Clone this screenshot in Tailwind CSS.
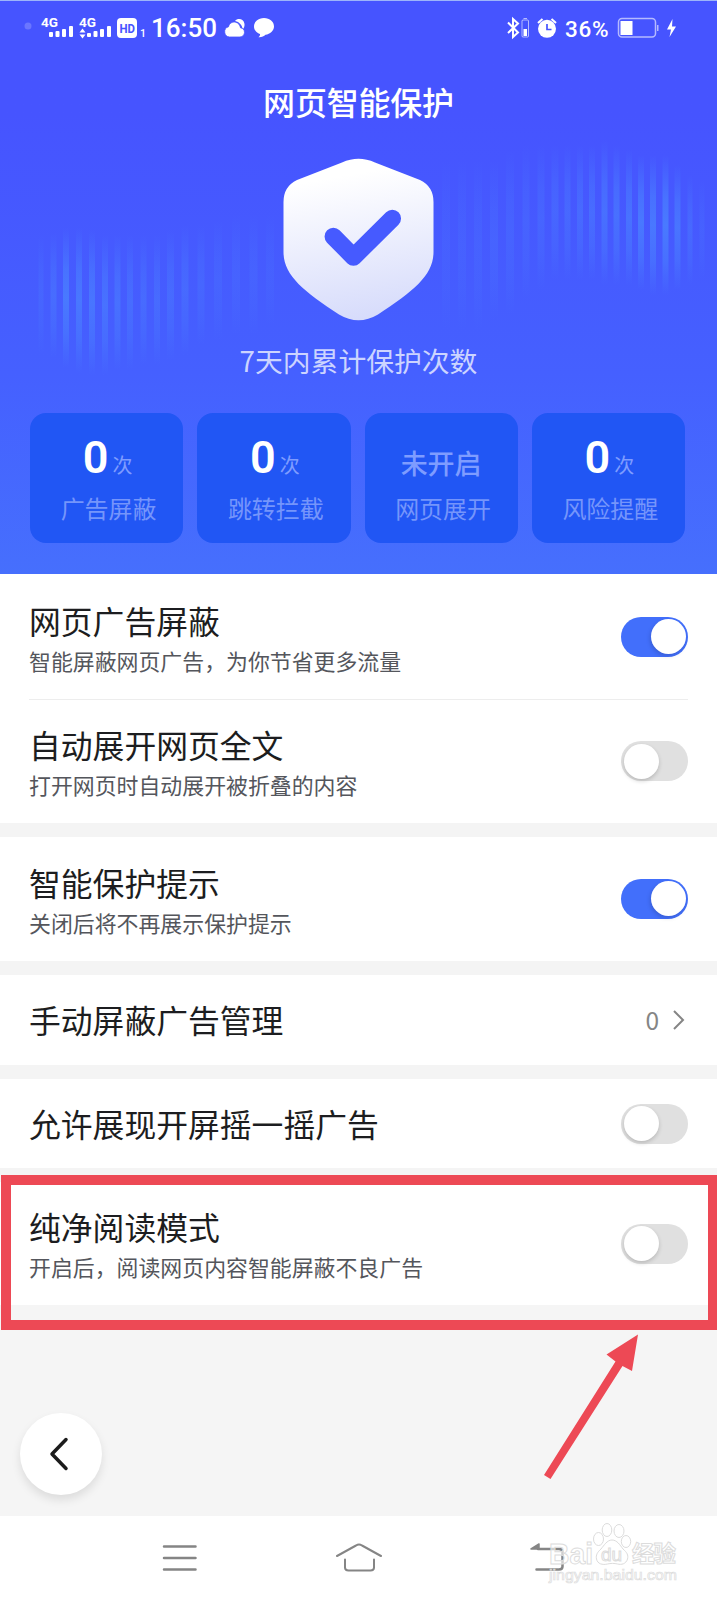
<!DOCTYPE html>
<html lang="zh-CN">
<head>
    <meta charset="UTF-8">
    <meta name="viewport" content="width=device-width, initial-scale=1.0">
    <title>网页智能保护</title>
    <script src="https://cdn.jsdelivr.net/npm/@tailwindcss/browser@4"></script>
</head>
<body class="bg-[#f5f5f5] font-['Noto_Sans_CJK_SC',sans-serif] text-[#1c1d20]">
<div class="relative w-[717px] h-[1600px] overflow-hidden flex flex-col">

    <!-- Header -->
    <header class="relative h-[574px] shrink-0 bg-linear-to-b from-[#4654ff] from-20% via-[#4560ff] via-65% to-[#466ffd] border-t border-[#9db4fa] text-white">
        <!-- Light stripes -->
        <svg class="absolute left-0 top-0 w-[717px] h-[420px]" viewBox="0 1 717 420">
            <defs>
                <linearGradient id="stripe" x1="0" y1="0" x2="0" y2="1">
                    <stop offset="0" stop-color="#4a84ff" stop-opacity="0"/>
                    <stop offset=".3" stop-color="#4a84ff" stop-opacity=".7"/>
                    <stop offset=".5" stop-color="#4a84ff" stop-opacity=".9"/>
                    <stop offset=".75" stop-color="#4a84ff" stop-opacity=".6"/>
                    <stop offset="1" stop-color="#4a84ff" stop-opacity="0"/>
                </linearGradient>
            </defs>
            <g id="stripes" fill="url(#stripe)"></g>
        </svg>

        <!-- Status bar -->
        <div class="relative h-[54px] pl-4 pr-10 flex items-center justify-between">
            <div class="flex items-center">
                <svg class="w-[132px] h-[54px]" viewBox="16 1 132 54" fill="#fff" font-family="Roboto, sans-serif" font-weight="700">
                    <circle cx="28" cy="26" r="3.5" fill-opacity=".2"/>
                    <text x="41" y="26.500" font-size="13.500" textLength="17" lengthAdjust="spacingAndGlyphs">4G</text>
                    <rect x="49" y="32" width="4" height="5" rx="1"/>
                    <rect x="55.500" y="31" width="4" height="6" rx="1"/>
                    <rect x="62" y="29" width="4" height="8" rx="1"/>
                    <rect x="69" y="26" width="4" height="11" rx="1"/>
                    <text x="79" y="26.500" font-size="13.500" textLength="17" lengthAdjust="spacingAndGlyphs">4G</text>
                    <path d="M79.500 32.500 82.500 28.500 85.500 32.500zM79.500 34.500H85.500L82.500 38.500z"/>
                    <rect x="87" y="33" width="4" height="4" rx="1"/>
                    <rect x="93.500" y="31" width="4" height="6" rx="1"/>
                    <rect x="100" y="29" width="4" height="8" rx="1"/>
                    <rect x="107" y="26" width="4" height="11" rx="1"/>
                    <rect x="117" y="18" width="20" height="20" rx="4"/>
                    <text x="119.500" y="32.500" font-size="12.500" textLength="15.500" lengthAdjust="spacingAndGlyphs" fill="#4654ff">HD</text>
                    <text x="140" y="37" font-size="10.500" font-weight="500">1</text>
                </svg>
                <span class="w-[70px] pl-[3px] font-['Roboto'] font-medium text-[26px] leading-[54px]">16:50</span>
                <svg class="w-[58px] h-[54px]" viewBox="218 1 58 54" fill="#fff">
                    <path d="M235 21c3-3.500 9-2 9.500 3 .2 2-.5 4-1.800 5.200C242 25 239.500 22 235 21z"/>
                    <path d="M229.500 37a5.200 5.200 0 0 1-1-10.200c.8-3.600 4-5.300 7-4.600 3 .6 4.600 3 5 5.600 2.300.3 4 2 4 4.500 0 2.600-2 4.700-4.500 4.700z" stroke="#4654ff" stroke-width=".8"/>
                    <path d="M264 18c5.800 0 10 3.600 10 8.500 0 4.200-4 7.500-8.500 8.300-1.500 1.500-4 2.600-7 2.400 1.200-1 1.700-2 1.500-3.200-3.500-1.200-6-4-6-7.500 0-4.900 4.200-8.500 10-8.500z"/>
                </svg>
            </div>
            <div class="flex items-center">
                <svg class="w-[56px] h-[54px]" viewBox="505 1 56 54" fill="none" stroke="#fff">
                    <path d="M508 22.500 518 32.500 513 37V19L518 23.500 508 33" stroke-width="2"/>
                    <g stroke-opacity=".6">
                        <rect x="522" y="20" width="6.500" height="17" rx="1"/>
                        <path d="M523.500 18.500h3.500"/>
                    </g>
                    <rect x="523.500" y="29" width="3.500" height="7" fill="#fff" stroke="none"/>
                    <circle cx="547" cy="28.800" r="9" fill="#fff" stroke="none"/>
                    <path d="M538 23 542.500 19M556 23 551.500 19" stroke-width="2"/>
                    <path d="M547 24v5.500h4.500" stroke="#4654ff" stroke-width="1.700"/>
                </svg>
                <span class="w-[54px] pl-1 pt-px font-['Roboto'] font-medium text-[22.5px] tracking-[0.7px] leading-[54px]">36%</span>
                <svg class="w-[62px] h-[54px]" viewBox="615 1 62 54" fill="#fff">
                    <rect x="618.500" y="18.500" width="37" height="18.500" rx="3.500" fill="none" stroke="#fff" stroke-opacity=".6" stroke-width="1.500"/>
                    <rect x="620.500" y="21" width="12" height="14"/>
                    <rect x="657" y="25" width="1.500" height="6" fill-opacity=".6"/>
                    <path d="M672.500 19 667 29.500h4L669.500 37 676 26.500h-4z"/>
                </svg>
            </div>
        </div>

        <h1 class="relative pt-[22px] text-center text-[32px] leading-[48px] font-medium tracking-[-0.2px]">网页智能保护</h1>

        <div class="relative mt-[33px] flex flex-col items-center">
            <svg class="w-[152px] h-[164px]" viewBox="283 158 152 164">
                <defs>
                    <linearGradient id="shield" x1=".42" y1="0" x2=".58" y2="1">
                        <stop offset=".1" stop-color="#fff"/>
                        <stop offset="1" stop-color="#d6dbfb"/>
                    </linearGradient>
                </defs>
                <path d="M342 162.500Q358.500 155 375 162.500L420 180Q433.500 186.500 433.500 202V252C433.500 275 414 291 378 314.500Q358.500 326 339 314.500C303 291 283.500 275 283.500 252V202Q283.500 186.500 297 180Z" fill="url(#shield)"/>
                <path d="M333.300 236.500 353.500 257 392.300 218.500" fill="none" stroke="#465aff" stroke-width="17.500" stroke-linecap="round" stroke-linejoin="round"/>
            </svg>
            <p class="mt-4 text-[27.8px] leading-[44px] text-[#ccd4ff]">7天内累计保护次数</p>
        </div>

        <!-- Counters -->
        <div class="relative mt-[31px] pl-[30px] pr-8 grid grid-cols-4 gap-[14px] text-center">
            <div class="h-[130px] rounded-2xl bg-[#2156f4] pt-[19px]">
                <div class="h-[52px] pl-0.5 flex justify-center items-baseline gap-1">
                    <span class="font-['Roboto'] font-semibold text-[45px] leading-[52px]">0</span>
                    <span class="text-[20px] leading-[24px] text-[#7e9cff]">次</span>
                </div>
                <p class="mt-1.5 pl-1 text-2xl leading-[36px] text-[#7595fb]">广告屏蔽</p>
            </div>
            <div class="h-[130px] rounded-2xl bg-[#2156f4] pt-[19px]">
                <div class="h-[52px] pl-0.5 flex justify-center items-baseline gap-1">
                    <span class="font-['Roboto'] font-semibold text-[45px] leading-[52px]">0</span>
                    <span class="text-[20px] leading-[24px] text-[#7e9cff]">次</span>
                </div>
                <p class="mt-1.5 pl-1 text-2xl leading-[36px] text-[#7595fb]">跳转拦截</p>
            </div>
            <div class="h-[130px] rounded-2xl bg-[#2156f4] pt-[19px]">
                <div class="h-[52px] pt-[11px] text-[27px] leading-[40px] font-medium text-[#7e9cff]">未开启</div>
                <p class="mt-1.5 pl-1 text-2xl leading-[36px] text-[#7595fb]">网页展开</p>
            </div>
            <div class="h-[130px] rounded-2xl bg-[#2156f4] pt-[19px]">
                <div class="h-[52px] pl-0.5 flex justify-center items-baseline gap-1">
                    <span class="font-['Roboto'] font-semibold text-[45px] leading-[52px]">0</span>
                    <span class="text-[20px] leading-[24px] text-[#7e9cff]">次</span>
                </div>
                <p class="mt-1.5 pl-1 text-2xl leading-[36px] text-[#7595fb]">风险提醒</p>
            </div>
        </div>
    </header>

    <!-- Settings -->
    <main class="flex flex-col gap-[14px] bg-[#f4f4f4]">
        <section class="bg-white px-[29px]">
            <div class="h-[125px] flex items-center justify-between">
                <div class="pt-0.5">
                    <h2 class="text-[31.8px] leading-[40px]">网页广告屏蔽</h2>
                    <p class="mt-1.5 text-[21.9px] leading-[30px] text-[#54565c]">智能屏蔽网页广告，为你节省更多流量</p>
                </div>
                <div class="w-[67px] h-10 rounded-full bg-[#426ffb] flex items-center justify-end pr-[2.5px]">
                    <div class="size-[35px] rounded-full bg-white shadow-[-1px_2px_4px_rgba(0,0,0,0.15)]"></div>
                </div>
            </div>
            <div class="h-[124px] border-t border-[#ededed] flex items-center justify-between">
                <div class="pt-px">
                    <h2 class="text-[31.8px] leading-[40px]">自动展开网页全文</h2>
                    <p class="mt-1.5 text-[21.9px] leading-[30px] text-[#54565c]">打开网页时自动展开被折叠的内容</p>
                </div>
                <div class="w-[67px] h-10 mb-px rounded-full bg-[#e0e0e0] flex items-center pl-[2.5px]">
                    <div class="size-[35px] rounded-full bg-white shadow-[0_2px_4px_rgba(0,0,0,0.18)]"></div>
                </div>
            </div>
        </section>

        <section class="h-[124px] bg-white px-[29px] flex items-center justify-between">
            <div class="pt-px">
                <h2 class="text-[31.8px] leading-[40px]">智能保护提示</h2>
                <p class="mt-1.5 text-[21.9px] leading-[30px] text-[#54565c]">关闭后将不再展示保护提示</p>
            </div>
            <div class="w-[67px] h-10 mb-px rounded-full bg-[#426ffb] flex items-center justify-end pr-[2.5px]">
                <div class="size-[35px] rounded-full bg-white shadow-[-1px_2px_4px_rgba(0,0,0,0.15)]"></div>
            </div>
        </section>

        <section class="h-[90px] bg-white px-[29px] flex items-center justify-between">
            <h2 class="pb-0.5 text-[31.8px] leading-[40px]">手动屏蔽广告管理</h2>
            <div class="flex items-center gap-[14px] pr-[3px] text-[#858585]">
                <span class="pb-px text-[24.5px] leading-[36px]">0</span>
                <svg class="w-3 h-5" viewBox="0 0 12 20" fill="none" stroke="currentColor" stroke-width="2">
                    <path d="M1 1 10 10 1 19"/>
                </svg>
            </div>
        </section>

        <section class="h-[89px] bg-white px-[29px] flex items-center justify-between">
            <h2 class="pb-0.5 text-[31.8px] leading-[40px]">允许展现开屏摇一摇广告</h2>
            <div class="w-[67px] h-10 rounded-full bg-[#e0e0e0] flex items-center pl-[2.5px]">
                <div class="size-[35px] rounded-full bg-white shadow-[0_2px_4px_rgba(0,0,0,0.18)]"></div>
            </div>
        </section>

        <section class="h-[123px] bg-white px-[29px] flex items-center justify-between">
            <div>
                <h2 class="text-[31.8px] leading-[40px]">纯净阅读模式</h2>
                <p class="mt-1.5 text-[21.9px] leading-[30px] text-[#54565c]">开启后，阅读网页内容智能屏蔽不良广告</p>
            </div>
            <div class="w-[67px] h-10 rounded-full bg-[#e0e0e0] flex items-center pl-[2.5px]">
                <div class="size-[35px] rounded-full bg-white shadow-[0_2px_4px_rgba(0,0,0,0.18)]"></div>
            </div>
        </section>
    </main>

    <!-- Back button -->
    <div class="grow pl-5 pt-[108px]">
        <button class="size-[82px] rounded-full bg-white shadow-[0_5px_10px_rgba(0,0,0,0.1)] flex items-center justify-center">
            <svg class="w-5 h-9 mr-1" viewBox="0 0 20 36" fill="none" stroke="#1c1c1c" stroke-width="3.5" stroke-linecap="round" stroke-linejoin="round">
                <path d="M17 3.500 3 18 17 32.500"/>
            </svg>
        </button>
    </div>

    <!-- System navigation -->
    <nav class="h-[84px] shrink-0 bg-white">
        <svg class="w-[717px] h-[84px]" viewBox="0 1516 717 84" fill="none" stroke="#858585" stroke-width="2.500" stroke-linecap="round" stroke-linejoin="round">
            <path d="M164 1546.500H195.500M164 1558H195.500M164 1569.500H195.500"/>
            <path d="M337 1556 356 1545.500Q359 1543.500 362 1545.500L381 1556M345 1559.500V1567.500Q345 1570.500 348.500 1570.500H370.500Q374 1570.500 374 1567.500V1559.500" stroke-width="2"/>
            <path d="M538 1549H559Q562.500 1549 562.500 1552V1566.500Q562.500 1569.500 559 1569.500H536.500"/>
            <path d="M531 1549 539 1544V1549z" fill="#858585" stroke-width="1.500"/>
        </svg>
    </nav>

    <!-- Watermark -->
    <svg class="absolute left-[540px] top-[1516px] w-[150px] h-[76px]" viewBox="540 1516 150 76" fill="#fff" fill-opacity=".6" stroke="#dcdcdc" stroke-width="1">
        <text x="549" y="1563.500" font-family="Liberation Sans, sans-serif" font-weight="700" font-size="30" textLength="44" lengthAdjust="spacingAndGlyphs">Bai</text>
        <ellipse cx="598.500" cy="1539" rx="5" ry="6.500"/>
        <ellipse cx="607" cy="1530" rx="4.800" ry="6.500"/>
        <ellipse cx="619" cy="1531" rx="5" ry="6.500"/>
        <ellipse cx="626" cy="1541.500" rx="4.700" ry="6"/>
        <path d="M612 1540c5 0 8 5 11 9 4 3.500 5.500 6 4.500 10-1.500 5-6 6-10 5-3-.8-7-.8-10 0-5 1.200-10 0-11-5-.8-4 1-7 4.500-10 3-3.500 6-9 11-9z"/>
        <text x="601" y="1561" font-family="Liberation Sans, sans-serif" font-size="19" textLength="21">du</text>
        <text x="632" y="1562" font-family="Noto Sans CJK SC, sans-serif" font-weight="700" font-size="22.500" textLength="44">经验</text>
        <text x="549" y="1580" font-family="Liberation Sans, sans-serif" font-size="15.500" stroke-width=".7" textLength="128" lengthAdjust="spacingAndGlyphs">jingyan.baidu.com</text>
    </svg>

    <!-- Highlight frame and arrow -->
    <div class="absolute left-px top-[1175px] w-[717px] h-[155px] border-[10px] border-[#ed4955]"></div>
    <svg class="absolute left-[540px] top-[1330px] w-[105px] h-[155px]" viewBox="540 1330 105 155" fill="#ed4955">
        <path d="M638 1334.500 632 1371 622.500 1366 550.500 1479 544 1475 615.500 1361.500 606.500 1354.500z"/>
    </svg>
</div>

<script>
    // [center x, top, height, width, opacity]
    const stripes = [
        [41, 235, 120, 5, .25], [53.5, 233, 125, 6, .45], [66, 228, 140, 6, .8], [79, 228, 145, 6, .75],
        [92, 230, 145, 6, .7], [105, 235, 140, 6, .6], [117.500, 235, 135, 6, .55], [130, 235, 135, 6, .45],
        [143.500, 235, 130, 6, .4], [157, 235, 130, 6, .4], [170.500, 230, 130, 7, .4], [185, 225, 130, 7, .38],
        [201, 225, 120, 7, .28], [218, 220, 120, 8, .22], [236, 215, 120, 8, .2], [253.500, 215, 120, 8, .2],
        [270, 215, 110, 8, .15], [446, 160, 170, 8, .15], [462, 160, 170, 8, .18], [478, 160, 170, 8, .2],
        [494, 160, 160, 8, .25], [510, 150, 165, 8, .25], [526, 145, 155, 7, .25], [541, 145, 145, 7, .3],
        [555, 145, 135, 7, .35], [567.500, 145, 135, 6, .4], [580, 145, 135, 6, .45], [592, 145, 135, 6, .5],
        [604.500, 140, 145, 6, .6], [616.500, 145, 140, 6, .6], [629, 150, 135, 6, .65], [641, 155, 135, 6, .8],
        [653, 155, 140, 6, .8], [665.500, 155, 140, 6, .85], [677.500, 165, 125, 6, .7], [690, 175, 110, 5, .4],
        [702, 180, 100, 5, .2]
    ];
    document.getElementById('stripes').innerHTML = stripes.map(([x, y, h, w, o]) =>
        `<rect x="${x - w / 2}" y="${y}" width="${w}" height="${h}" opacity="${o}"/>`
    ).join('');
</script>
</body>
</html>
